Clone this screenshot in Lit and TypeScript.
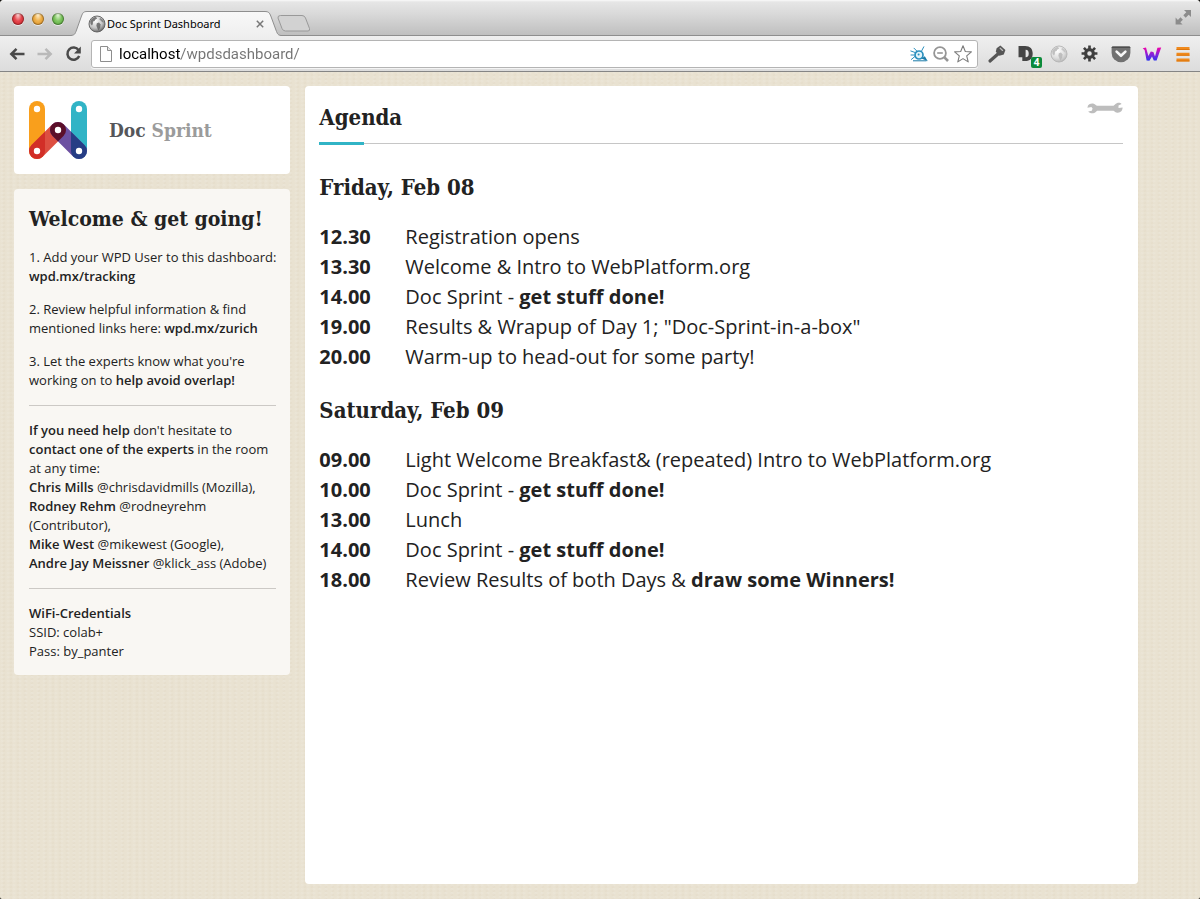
import { LitElement, html, svg, css } from 'lit';
import { customElement, property } from 'lit/decorators.js';

interface Slot {
  time: string;
  text: string;
  strong?: string;
}

interface Day {
  title: string;
  slots: Slot[];
}

const DAYS: Day[] = [
  {
    title: 'Friday, Feb 08',
    slots: [
      { time: '12.30', text: 'Registration opens' },
      { time: '13.30', text: 'Welcome & Intro to WebPlatform.org' },
      { time: '14.00', text: 'Doc Sprint - ', strong: 'get stuff done!' },
      { time: '19.00', text: 'Results & Wrapup of Day 1; "Doc-Sprint-in-a-box"' },
      { time: '20.00', text: 'Warm-up to head-out for some party!' },
    ],
  },
  {
    title: 'Saturday, Feb 09',
    slots: [
      { time: '09.00', text: 'Light Welcome Breakfast& (repeated) Intro to WebPlatform.org' },
      { time: '10.00', text: 'Doc Sprint - ', strong: 'get stuff done!' },
      { time: '13.00', text: 'Lunch' },
      { time: '14.00', text: 'Doc Sprint - ', strong: 'get stuff done!' },
      { time: '18.00', text: 'Review Results of both Days & ', strong: 'draw some Winners!' },
    ],
  },
];

const globe = (id: string, dark: string, light: string) => html`
  <svg viewBox="0 0 18 18" width="18" height="18" aria-hidden="true">
    <defs>
      <radialGradient id=${id} cx="0.4" cy="0.3" r="0.75">
        <stop offset="0" stop-color="#ffffff" />
        <stop offset="0.6" stop-color=${light} />
        <stop offset="1" stop-color=${dark} />
      </radialGradient>
    </defs>
    <circle cx="9" cy="9" r="8" fill="url(#${id})" stroke=${dark} stroke-width="0.9" />
    <path d="M2.2 6.2C3.4 3.6 5.4 2 8 1.9L9.2 3.4 7.4 4.4 6.600 6 5 6.600 4.800 9 4 10.600 2.600 9Z" fill=${dark} opacity="0.8" />
    <path d="M8.800 8.200 11 7.600 12.600 9.400 12.200 12.400 10.600 15.400 9.400 13.200 8.400 10.800Z" fill=${dark} opacity="0.8" />
    <path d="M12 2.8 14.6 4.6 16 7.4 14.4 7.2 12.6 5.6 11.4 4.4Z" fill=${dark} opacity="0.6" />
  </svg>
`;

const icons = {
  back: svg`<path d="M16.5 9H3.5M8.5 3.8 3.3 9l5.2 5.2" fill="none" stroke="#4a4a4a" stroke-width="2.5"/>`,
  forward: svg`<path d="M1.5 9h13M9.5 3.8 14.7 9l-5.2 5.2" fill="none" stroke="#b9b9b9" stroke-width="2.5"/>`,
  reload: svg`<path d="M14.6 5.2A6.1 6.1 0 1 0 15.2 11" fill="none" stroke="#4a4a4a" stroke-width="2.5"/><path d="M16.8 1.6v6.8H10Z" fill="#4a4a4a"/>`,
  page: svg`<path d="M3.5 1.5h7l4 4v11h-11Z" fill="#fdfdfd" stroke="#8d8d8d"/><path d="M10.5 1.5v4h4" fill="#e6e6e6" stroke="#8d8d8d"/>`,
  bug: svg`<g fill="none" stroke="#2a8fbd" stroke-width="1" stroke-linecap="round"><path d="M5.400 7.600.8 6M5 11.400 1.400 14.400M1 10h3M11.400 6.400 13.800 1.800M4 3.200l3 3"/></g><circle cx="9" cy="10" r="4" fill="#e2f4fa" stroke="#2a8fbd" stroke-width="1.700"/><path d="M11.500 13.400 17.800 16.200 14.800 11.200Z" fill="#1b7ba8"/><path d="M3 15.800h13.500" stroke="#1b7ba8" stroke-width="1"/><circle cx="8.600" cy="9.600" r="1" fill="#2a8fbd"/>`,
  zoomOut: svg`<circle cx="8" cy="8" r="5.9" fill="none" stroke="#959595" stroke-width="1.8"/><path d="M5.2 8h5.6" stroke="#959595" stroke-width="1.6"/><path d="M12.4 12.4 16 16" stroke="#959595" stroke-width="2.6"/>`,
  star: svg`<path d="M9 .8l2.3 5.7 6.1.4-4.7 4 1.5 6L9 13.6l-5.2 3.3 1.5-6-4.7-4 6.1-.4Z" fill="#fff" stroke="#7b7b7b" stroke-width="1.1" stroke-linejoin="round"/>`,
  key: svg`<path d="M10.8 8.2 2 16" stroke="#555" stroke-width="3.200" stroke-linecap="round"/><path d="M8.600 3.200 12.4.6l5 4.400-1.6 4.400-4.400 1.400-3.600-4Z" fill="#555"/><path d="M12.2 3.2 14.6 5.4" stroke="#bcbcbc" stroke-width="1.3" stroke-linecap="round"/>`,
  disconnect: svg`<path fill-rule="evenodd" d="M-.5 1H6.500C11.800 1 14.500 4 14.500 9s-2.700 8-8 8H3.500v-4H-.5ZM7 5v8c2.400 0 3.300-1.400 3.300-4S9.400 5 7 5Z" fill="#454545"/>`,
  gear: svg`<g fill="none" stroke="#3f3f3f"><circle cx="9" cy="9" r="4.1" stroke-width="3.4"/><path d="M9 .6v4M9 13.4v4M.6 9h4M13.4 9h4M3.1 3.1l2.8 2.8M12.1 12.1l2.8 2.8M3.1 14.9l2.8-2.8M12.1 5.9l2.8-2.8" stroke-width="2.8"/></g>`,
  pocket: svg`<path d="M1 1.4h16q1.4 0 1.4 1.4V8A9.4 9.2 0 0 1-.4 8V2.800Q-.4 1.400 1 1.400Z" fill="#717171"/><path d="M-.4 3V2.800Q-.4 1.400 1 1.400H17q1.400 0 1.400 1.400V3Z" fill="#4e4e4e"/><path d="M4.600 6.600 9 10.800l4.400-4.200" fill="none" stroke="#f6f6f6" stroke-width="2.600" stroke-linecap="round" stroke-linejoin="round"/>`,
  wave: svg`<defs><linearGradient id="wave" x1="0" y1="0" x2="0" y2="1"><stop offset="0" stop-color="#f400a8"/><stop offset="0.500" stop-color="#8a22d8"/><stop offset="1" stop-color="#2f35ee"/></linearGradient></defs><path d="M-.3 3.200 3 2.400 5.400 11 7.800 6.600 10.400 7 12 11.600 14.400 2.800 18.200 2.400 13.600 15.400 10.800 15.600 9 11.400 6.400 15.800 3.600 15.600 1.600 5Z" fill="url(#wave)"/>`,
  menu: svg`<path d="M2.500 3.500h13M2.500 9.200h13M2.500 14.900h13" stroke="#f08a1d" stroke-width="3"/><path d="M2.500 4.500h13M2.500 10.200h13M2.500 15.900h13" stroke="#dd750c" stroke-width="1"/>`,
  expand: svg`<path d="M10 2h7v7l-2.300-2.300-3 3-2.400-2.400 3-3ZM8.600 16.600h-7v-7L3.900 11.900l2.600-2.600 2.400 2.400-2.600 2.600Z" fill="#8c8c8c"/>`,
};

const icon = (shape: unknown, size = 18) =>
  html`<svg viewBox="0 0 18 18" width=${size} height=${size} overflow="visible" aria-hidden="true">${shape}</svg>`;

@customElement('browser-chrome')
export class BrowserChrome extends LitElement {
  @property() heading = '';
  @property() address = '';

  static styles = css`
    :host {
      display: block;
      font-family: 'Noto Sans', 'Open Sans', sans-serif;
    }
    button {
      display: flex;
      align-items: center;
      justify-content: center;
      padding: 0;
      border: 0;
      background: none;
      color: inherit;
      font: inherit;
    }
    svg {
      display: block;
      flex: none;
    }
    .strip {
      display: flex;
      align-items: flex-end;
      height: 36px;
      background: linear-gradient(#fafafa 0, #e6e6e6 2px, #d9d9d9 14px, #bfbfbf 35px);
      box-shadow: inset 0 -1px #8e8e8e;
    }
    .lights {
      display: flex;
      gap: 8px;
      padding: 0 0 11px 12px;
    }
    .light {
      width: 12px;
      height: 12px;
      border-radius: 50%;
      box-shadow: inset 0 0 1px 1px rgba(0, 0, 0, 0.35), 0 1px rgba(255, 255, 255, 0.6);
    }
    .close {
      background: radial-gradient(ellipse at 50% 15%, #fbd5d5 0, #e5474e 45%, #dd3239 70%, #f89a97 100%);
    }
    .minimise {
      background: radial-gradient(ellipse at 50% 15%, #fff0cf 0, #eeb04a 45%, #e8a035 70%, #fde58d 100%);
    }
    .maximise {
      background: radial-gradient(ellipse at 50% 15%, #e6f8d9 0, #7fc661 45%, #68b64b 70%, #c8f09f 100%);
    }
    .tab {
      display: grid;
      width: 210px;
      height: 25px;
      margin-left: 7px;
    }
    .tab > * {
      grid-area: 1 / 1;
    }
    .label {
      display: flex;
      align-items: center;
      padding: 0 13px 0 17px;
      font-size: 11px;
      line-height: 16px;
      color: #000;
    }
    .title {
      flex: 1;
      padding-left: 1px;
      white-space: nowrap;
    }
    .dismiss {
      width: 16px;
      height: 16px;
    }
    .add {
      height: 25px;
      align-items: flex-start;
      padding-top: 4px;
      margin-left: -4px;
    }
    .grow {
      flex: 1;
    }
    .full {
      padding: 0 8px 10px 0;
    }
    .bar {
      display: flex;
      align-items: center;
      box-sizing: border-box;
      height: 36px;
      padding: 0 2px 0 3px;
      border-bottom: 1px solid #858585;
      background: linear-gradient(#efefef, #dcdcdc);
    }
    .nav {
      width: 28px;
      height: 28px;
    }
    .omnibox {
      display: flex;
      align-items: center;
      flex: 1;
      gap: 4px;
      box-sizing: border-box;
      height: 28px;
      margin: 0 3px 0 4px;
      padding: 0 5px;
      border: 1px solid #b4b4b4;
      border-radius: 3px;
      background: #fff;
      box-shadow: 0 1px rgba(255, 255, 255, 0.7);
    }
    .url {
      flex: 1;
      min-width: 0;
      margin: 0;
      padding: 0;
      border: 0;
      outline: 0;
      font: 15px/22px Roboto, sans-serif;
      color: transparent;
      background: linear-gradient(90deg, #000 62px, #747474 62px);
      -webkit-background-clip: text;
      background-clip: text;
    }
    .ext {
      position: relative;
      width: 31px;
      height: 28px;
    }
    .badge {
      position: absolute;
      right: 1px;
      bottom: 0;
      width: 11px;
      border-radius: 2px;
      background: #0b8a3a;
      color: #fff;
      font-size: 10px;
      font-weight: 700;
      line-height: 11px;
    }
  `;

  render() {
    return html`
      <div class="strip">
        <div class="lights">
          <button class="light close" aria-label="Close window"></button>
          <button class="light minimise" aria-label="Minimise window"></button>
          <button class="light maximise" aria-label="Zoom window"></button>
        </div>
        <div class="tab">
          <svg viewBox="0 0 210 25" width="210" height="25" aria-hidden="true">
            <defs>
              <linearGradient id="tab" x1="0" y1="0" x2="0" y2="1">
                <stop offset="0" stop-color="#f8f8f8" />
                <stop offset="1" stop-color="#efefef" />
              </linearGradient>
            </defs>
            <path
              d="M0 24.500C4 24 4 22.500 5 20.500L10.500 5C11.800 1.600 12.500.5 16 .5H194C197.500.5 198.500 1.600 199.800 5L205.500 20.500C206.500 22.500 206.500 24 210 24.500V25H0Z"
              fill="url(#tab)"
            />
            <path
              d="M0 24.500C4 24 4 22.500 5 20.500L10.500 5C11.800 1.600 12.500.5 16 .5H194C197.500.5 198.500 1.600 199.800 5L205.500 20.500C206.500 22.500 206.500 24 210 24.500"
              fill="none"
              stroke="#8e8e8e"
            />
          </svg>
          <div class="label">
            ${globe('favicon', '#5c5c5c', '#c4c4c4')}
            <span class="title">${this.heading}</span>
            <button class="dismiss" aria-label="Close tab">
              <svg viewBox="0 0 8 8" width="8" height="8" aria-hidden="true">
                <path d="M.8.8l6.400 6.400M7.200.8.8 7.200" stroke="#777" stroke-width="1.500" />
              </svg>
            </button>
          </div>
        </div>
        <button class="add" aria-label="New tab">
          <svg viewBox="0 0 33 17" width="33" height="17" aria-hidden="true">
            <path
              d="M3.500.5H25q2.500 0 3.500 2.500l4 10.500q.6 2.500-1.500 2.500H8.500q-2.500 0-3.500-2.500L1 3Q.6.5 3.500.5Z"
              fill="#d2d2d2"
              stroke="#999"
            />
          </svg>
        </button>
        <div class="grow"></div>
        <button class="full" aria-label="Full screen">${icon(icons.expand)}</button>
      </div>
      <div class="bar">
        <button class="nav" aria-label="Back">${icon(icons.back)}</button>
        <button class="nav" aria-label="Forward">${icon(icons.forward)}</button>
        <button class="nav" aria-label="Reload">${icon(icons.reload)}</button>
        <div class="omnibox">
          ${icon(icons.page)}
          <input class="url" type="text" aria-label="Address" .value=${this.address} />
          <button aria-label="Page inspector">${icon(icons.bug)}</button>
          <button aria-label="Zoomed out">${icon(icons.zoomOut)}</button>
          <button aria-label="Bookmark">${icon(icons.star)}</button>
        </div>
        <button class="ext" aria-label="Key">${icon(icons.key)}</button>
        <button class="ext" aria-label="Disconnect">
          ${icon(icons.disconnect, 17)}<span class="badge">4</span>
        </button>
        <button class="ext" aria-label="Globe">${globe('ext', '#b4b4b4', '#dedede')}</button>
        <button class="ext" aria-label="Settings">${icon(icons.gear, 17)}</button>
        <button class="ext" aria-label="Pocket">${icon(icons.pocket, 18)}</button>
        <button class="ext" aria-label="W">${icon(icons.wave)}</button>
        <button class="ext" aria-label="Menu">${icon(icons.menu)}</button>
      </div>
    `;
  }
}

@customElement('side-bar')
export class SideBar extends LitElement {
  static styles = css`
    :host {
      display: flex;
      flex-direction: column;
      gap: 15px;
    }
    .card {
      border-radius: 4px;
      padding: 15px 14px 14px 15px;
    }
    .brand {
      display: flex;
      align-items: center;
      gap: 22px;
      padding-bottom: 15px;
      background: #fff;
    }
    .logo {
      display: block;
    }
    .name {
      margin: 0;
      font: 700 19px/28px 'DejaVu Serif Condensed', 'DejaVu Serif', serif;
      color: #55565a;
    }
    .light {
      color: #9b9b9b;
    }
    .info {
      background: #f9f7f3;
      color: #222;
      font-size: 13px;
      line-height: 19px;
      white-space: nowrap;
    }
    .info p {
      margin: 14px 0 0;
    }
    .info h2 {
      margin: 0;
      font: 700 21px/30px 'DejaVu Serif Condensed', 'DejaVu Serif', serif;
    }
    .info hr {
      height: 1px;
      margin: 15px 0;
      border: 0;
      background: #ccc9c5;
    }
    .info hr + p {
      margin: 0;
    }
    .info b {
      font-weight: 600;
    }
  `;

  render() {
    return html`
      <div class="card brand">
        <svg class="logo" viewBox="0 0 58 58" width="58" height="58" aria-hidden="true">
          <defs>
            <clipPath id="left"><rect width="16" height="58" rx="8" /></clipPath>
            <clipPath id="right"><rect x="42" width="16" height="58" rx="8" /></clipPath>
            <clipPath id="slope">
              <rect x="-8" y="-8" width="45.700" height="16" rx="8" transform="translate(8 50) rotate(-45)" />
            </clipPath>
          </defs>
          <g fill="none" stroke-width="16" stroke-linecap="round">
            <path d="M8 8V50" stroke="#f99f1c" />
            <path d="M50 8V50" stroke="#31b4c6" />
            <path d="M8 50 29 29" stroke="#dd4f41" />
            <path d="M50 50 29 29" stroke="#6c50a1" />
            <path d="M8 50 29 29" stroke="#d22f27" clip-path="url(#left)" />
            <path d="M50 50 29 29" stroke="#263d85" clip-path="url(#right)" />
            <path d="M50 50 29 29" stroke="#5b0f29" clip-path="url(#slope)" />
          </g>
          <g fill="#fff">
            <circle cx="8" cy="8" r="3.200" />
            <circle cx="50" cy="8" r="3.200" />
            <circle cx="29" cy="29" r="3.200" />
            <circle cx="8" cy="50" r="3.200" />
            <circle cx="50" cy="50" r="3.200" />
          </g>
        </svg>
        <h1 class="name">Doc <span class="light">Sprint</span></h1>
      </div>
      <div class="card info">
        <h2>Welcome &amp; get going!</h2>
        <p>1. Add your WPD User to this dashboard:<br /><b>wpd.mx/tracking</b></p>
        <p>2. Review helpful information &amp; find<br />mentioned links here: <b>wpd.mx/zurich</b></p>
        <p>3. Let the experts know what you're<br />working on to <b>help avoid overlap!</b></p>
        <hr />
        <p>
          <b>If you need help</b> don't hesitate to<br />
          <b>contact one of the experts</b> in the room<br />
          at any time:<br />
          <b>Chris Mills</b> @chrisdavidmills (Mozilla),<br />
          <b>Rodney Rehm</b> @rodneyrehm<br />
          (Contributor),<br />
          <b>Mike West</b> @mikewest (Google),<br />
          <b>Andre Jay Meissner</b> @klick_ass (Adobe)
        </p>
        <hr />
        <p><b>WiFi-Credentials</b><br />SSID: colab+<br />Pass: by_panter</p>
      </div>
    `;
  }
}

@customElement('agenda-panel')
export class AgendaPanel extends LitElement {
  @property({ attribute: false }) days: Day[] = [];

  static styles = css`
    :host {
      display: block;
      box-sizing: border-box;
      padding: 16px 15px 15px 14px;
      border-radius: 4px;
      background: #fff;
      color: #222;
    }
    .head {
      position: relative;
      display: flex;
      align-items: flex-start;
      justify-content: space-between;
      padding-bottom: 11px;
      border-bottom: 1px solid #c6c6c6;
      margin-bottom: 28px;
    }
    .head::after {
      content: '';
      position: absolute;
      left: 0;
      bottom: -2px;
      width: 45px;
      height: 3px;
      background: #31b4c6;
    }
    h2,
    h3 {
      margin: 0;
      font: 700 22px/30px 'DejaVu Serif Condensed', 'DejaVu Serif', serif;
    }
    .tools {
      padding: 0;
      border: 0;
      background: none;
    }
    .tools svg {
      display: block;
    }
    h3 {
      margin-bottom: 20px;
    }
    table {
      margin-bottom: 23px;
      border-collapse: collapse;
      font-size: 20px;
      line-height: 30px;
    }
    th,
    td {
      padding: 0;
      text-align: left;
    }
    th {
      width: 86px;
    }
  `;

  render() {
    return html`
      <div class="head">
        <h2>Agenda</h2>
        <button class="tools" aria-label="Settings">
          <svg viewBox="0 0 36 12" width="36" height="12" aria-hidden="true">
            <path
              d="M1 3.400C2.400 1.400 6.500.4 9 3.200L10 3.800H26.500L28 2.600C30 .2 33.500.4 34.600 2L31.500 3.600V6L35.600 5.600C35.600 8.500 33.500 11 30.500 10.800 28.500 10.700 27.500 9.500 26.500 8.800H10L9 9.800C6.500 12.200 2.600 11.400 1.200 9.400L4.800 8.800 5.600 6.600 4.400 5 .4 5.800Z"
              fill="#bdbdbd"
            />
          </svg>
        </button>
      </div>
      ${this.days.map(
        (day) => html`
          <h3>${day.title}</h3>
          <table>
            ${day.slots.map(
              (slot) => html`
                <tr>
                  <th scope="row">${slot.time}</th>
                  <td>${slot.text}${slot.strong ? html`<b>${slot.strong}</b>` : ''}</td>
                </tr>
              `,
            )}
          </table>
        `,
      )}
    `;
  }
}

@customElement('app-root')
export class AppRoot extends LitElement {
  static styles = css`
    :host {
      display: block;
      background: #111;
      font-family: 'Open Sans', 'Noto Sans', sans-serif;
    }
    .window {
      display: flex;
      flex-direction: column;
      min-height: 100vh;
      overflow: hidden;
      border-radius: 4px 4px 2px 2px;
      background-color: #e9e2d1;
      background-image: radial-gradient(circle at 2px 1px, rgba(255, 255, 255, 0.16) 0, transparent 2px),
        radial-gradient(circle at 4px 3px, rgba(190, 170, 130, 0.08) 0, transparent 2px);
      background-size: 6px 4px, 7px 4px;
    }
    .page {
      display: flex;
      align-items: flex-start;
      flex: 1;
      gap: 15px;
      padding: 14px 62px 15px 14px;
    }
    side-bar {
      flex: 0 0 276px;
    }
    agenda-panel {
      flex: 1;
      align-self: stretch;
    }
  `;

  render() {
    return html`
      <div class="window">
        <browser-chrome heading="Doc Sprint Dashboard" address="localhost/wpdsdashboard/"></browser-chrome>
        <main class="page">
          <side-bar></side-bar>
          <agenda-panel .days=${DAYS}></agenda-panel>
        </main>
      </div>
    `;
  }
}
